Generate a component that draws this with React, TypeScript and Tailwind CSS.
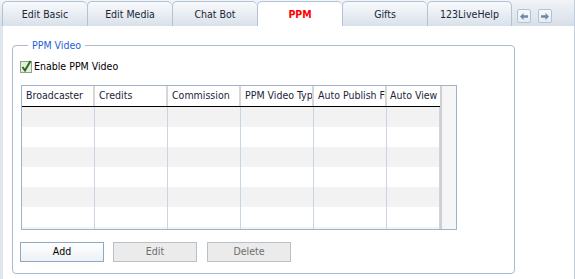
import React from "react";

const tabs = ["Edit Basic", "Edit Media", "Chat Bot", "PPM", "Gifts", "123LiveHelp"];
const columns = [
  { label: "Broadcaster", w: "w-[73px] pl-[4px] border-r-2" },
  { label: "Credits", w: "w-[73px] pl-[4px] border-r-2" },
  { label: "Commission", w: "w-[73px] pl-[4px] border-r-2" },
  { label: "PPM Video Type", w: "w-[73px] pl-[4px] border-r-2" },
  { label: "Auto Publish Feed", w: "w-[73px] pl-[4px] border-r-2" },
  { label: "Auto View", w: "w-[53px] pl-[3px]" },
];
const bodyCols = ["w-[73px]", "w-[73px]", "w-[73px]", "w-[73px]", "w-[73px]", "w-[53px]"];
const rows = [0, 1, 2, 3, 4, 5, 6];

const ArrowButton: React.FC<{ dir: "left" | "right" }> = ({ dir }) => (
  <div className="w-[14px] h-[14px] rounded-[2px] border border-[#b4c3d2] bg-gradient-to-b from-[#f7f9fc] to-[#e6ecf3] flex items-center justify-center">
    <svg width="8" height="7" viewBox="0 0 8 7">
      {dir === "left" ? (
        <path d="M0 3.5 L3.5 0 V2.2 H8 V4.8 H3.5 V7 Z" fill="#6f8aa6" />
      ) : (
        <path d="M8 3.5 L4.5 0 V2.2 H0 V4.8 H4.5 V7 Z" fill="#6f8aa6" />
      )}
    </svg>
  </div>
);

const App: React.FC = () => {
  return (
    <div
      className="w-[575px] h-[279px] bg-white flex flex-col overflow-hidden text-[10.5px] text-black"
      style={{ fontFamily: '"DejaVu Sans Condensed", "Liberation Sans", Arial, sans-serif' }}
    >
      {/* Tab bar */}
      <div className="h-[26px] flex items-end bg-gradient-to-b from-[#f1f4f8] to-[#d6dfe8] border-r border-[#c3cfdb] pl-[2px]">
        {tabs.map((t, i) => {
          const active = t === "PPM";
          return (
            <div
              key={t}
              className={
                "w-[85px] h-[25px] flex items-center justify-center border-t border-l border-[#b3c2d1] rounded-t-[5px] " +
                (i === tabs.length - 1 ? "border-r " : "") +
                (active
                  ? "bg-white text-[#ff0000] font-bold"
                  : "bg-gradient-to-b from-[#f8fafc] to-[#d9e1ea] text-[#1c2634]")
              }
            >
              <span className="pt-[2px]">{t}</span>
            </div>
          );
        })}
        <div className="flex gap-[7px] ml-[5px] mb-[3px]">
          <ArrowButton dir="left" />
          <ArrowButton dir="right" />
        </div>
      </div>

      {/* Content */}
      <div className="flex-1 border-l-[3px] border-[#dfe6ee] border-r border-r-[#c3cfdb] pl-[9px] pt-[13px]">
        <fieldset className="w-[503px] h-[235px] border border-[#a9bbcc] rounded-[4px] pl-[7px]">
          <legend className="ml-[8px] px-[4px] text-[#1f5fd6] leading-[13px]">PPM Video</legend>

          <label className="flex items-center gap-[2px] mt-[8px] h-[13px]">
            <svg width="12" height="13" viewBox="0 0 12 13">
              <rect x="0.5" y="1.5" width="11" height="11" fill="#e3eedc" stroke="#8aa58a" />
              <path d="M2.5 7 L5 10.5 L10.5 1" fill="none" stroke="#2d6a1c" strokeWidth="2" />
            </svg>
            <span>Enable PPM Video</span>
          </label>

          {/* Grid */}
          <div className="mt-[12px] ml-[1px] w-[436px] h-[145px] border border-[#9fb4c9] flex">
            <div className="w-[418px] flex flex-col">
              <div className="h-[21px] flex border-b border-black bg-white">
                {columns.map((c) => (
                  <div
                    key={c.label}
                    className={c.w + " h-[20px] flex items-center border-[#d7d7d7] whitespace-nowrap overflow-hidden text-[#1b1f3a]"}
                  >
                    {c.label}
                  </div>
                ))}
              </div>
              <div className="flex-1 overflow-hidden">
                {rows.map((r) => (
                  <div key={r} className={"h-[20px] flex " + (r % 2 === 0 ? "bg-[#f2f2f2]" : "bg-white")}>
                    {bodyCols.map((w, j) => (
                      <div key={j} className={w + " h-[20px] border-r border-[#c9d6e2]"} />
                    ))}
                  </div>
                ))}
              </div>
            </div>
            <div className="w-[16px] bg-[#f6f6f6] border-l-2 border-[#cfcfcf]" />
          </div>

          {/* Buttons */}
          <div className="flex mt-[12px] gap-[9px]">
            <button className="w-[84px] h-[20px] border border-[#8fa9c2] bg-gradient-to-b from-white to-[#edf1f5] text-black">
              Add
            </button>
            <button className="w-[84px] h-[20px] border border-[#b8c1ca] bg-[#ebebeb] text-[#6e6e6e]">Edit</button>
            <button className="w-[84px] h-[20px] ml-[1px] border border-[#b8c1ca] bg-[#ebebeb] text-[#6e6e6e]">
              Delete
            </button>
          </div>
        </fieldset>
      </div>
    </div>
  );
};

export default App;
